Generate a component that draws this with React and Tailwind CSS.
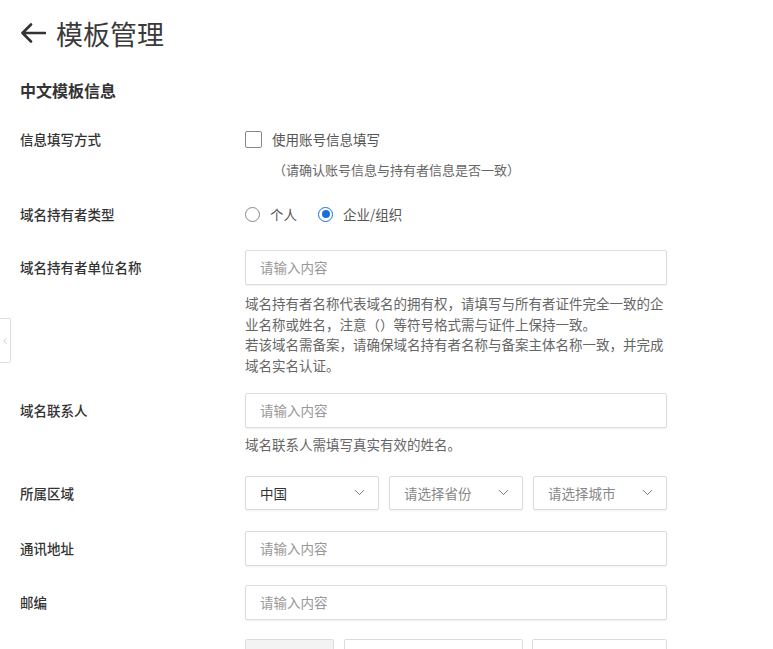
import { ChevronDown, ChevronLeft } from "lucide-react";

const font = { fontFamily: '"Noto Sans CJK SC", "Noto Sans", sans-serif' };

function Label({ children }) {
  return (
    <div className="w-[225px] shrink-0 text-[13.5px] font-medium text-[#333]">
      {children}
    </div>
  );
}

function TextInput() {
  return (
    <div className="flex h-[35px] w-[422px] items-center rounded-[2px] border border-[#dcdcdc] bg-white px-[14px] text-[13.5px] text-[#999] shadow-[0_1px_2px_rgba(0,0,0,0.06)]">
      请输入内容
    </div>
  );
}

function Select({ value, muted }) {
  return (
    <div className="flex h-[34px] w-[134px] items-center justify-between rounded-[2px] border border-[#dcdcdc] bg-white pl-[14px] pr-[10px] shadow-[0_1px_2px_rgba(0,0,0,0.06)]">
      <span className={`text-[13.5px] ${muted ? "text-[#888]" : "text-[#333]"}`}>
        {value}
      </span>
      <ChevronDown size={17} strokeWidth={1.4} className="text-[#777]" />
    </div>
  );
}

function App() {
  return (
    <div className="relative min-h-screen bg-white pl-5 pt-4" style={font}>
      {/* collapsed side tab */}
      <div className="absolute left-0 top-[318px] flex h-[45px] w-[11px] items-center justify-center rounded-r-[2px] border border-l-0 border-[#ddd] bg-white">
        <ChevronLeft size={14} strokeWidth={1.5} className="text-[#aaa]" />
      </div>

      <header className="flex h-[34px] items-center gap-[10px]">
        <svg width="26" height="22" viewBox="0 0 26 22" fill="none">
          <path
            d="M25 11H2.5M11 2.5L2.5 11L11 19.5"
            stroke="#333"
            strokeWidth="2.6"
            strokeLinecap="round"
            strokeLinejoin="round"
          />
        </svg>
        <h1 className="text-[27px] leading-none text-[#3a3a3a]">模板管理</h1>
      </header>

      <h2 className="mt-[30px] text-[16px] font-bold leading-5 text-[#333]">
        中文模板信息
      </h2>

      {/* 信息填写方式 */}
      <div className="mt-[29px] flex h-5 items-center">
        <Label>信息填写方式</Label>
        <div className="flex items-center gap-[10px]">
          <span className="h-[17px] w-[17px] rounded-[2px] border border-[#888] bg-white" />
          <span className="text-[13.5px] text-[#555]">使用账号信息填写</span>
        </div>
      </div>
      <div className="mt-[11px] pl-[225px] text-[13px] leading-5 text-[#666]">
        <span className="pl-[28px]">（请确认账号信息与持有者信息是否一致）</span>
      </div>

      {/* 域名持有者类型 */}
      <div className="mt-6 flex h-5 items-center">
        <Label>域名持有者类型</Label>
        <div className="flex items-center">
          <span className="h-[15px] w-[15px] rounded-full border border-[#888] bg-white" />
          <span className="ml-[10px] text-[13.5px] text-[#555]">个人</span>
          <span className="ml-[21px] flex h-[15px] w-[15px] items-center justify-center rounded-full border border-[#1a6fd6] bg-white">
            <span className="h-[8px] w-[8px] rounded-full bg-[#1a6fd6]" />
          </span>
          <span className="ml-[10px] text-[13.5px] text-[#555]">企业/组织</span>
        </div>
      </div>

      {/* 域名持有者单位名称 */}
      <div className="mt-[26px] flex items-center">
        <Label>域名持有者单位名称</Label>
        <TextInput />
      </div>
      <div className="mt-2 pl-[225px] text-[13.5px] leading-[20.7px] text-[#666]">
        <div>域名持有者名称代表域名的拥有权，请填写与所有者证件完全一致的企</div>
        <div>业名称或姓名，注意（）等符号格式需与证件上保持一致。</div>
        <div>若该域名需备案，请确保域名持有者名称与备案主体名称一致，并完成</div>
        <div>域名实名认证。</div>
      </div>

      {/* 域名联系人 */}
      <div className="mt-[17px] flex items-center">
        <Label>域名联系人</Label>
        <TextInput />
      </div>
      <div className="mt-[6px] pl-[225px] text-[13.5px] leading-5 text-[#666]">
        域名联系人需填写真实有效的姓名。
      </div>

      {/* 所属区域 */}
      <div className="mt-[22px] flex items-center">
        <Label>所属区域</Label>
        <div className="flex gap-[10px]">
          <Select value="中国" />
          <Select value="请选择省份" muted />
          <Select value="请选择城市" muted />
        </div>
      </div>

      {/* 通讯地址 */}
      <div className="mt-[21px] flex items-center">
        <Label>通讯地址</Label>
        <TextInput />
      </div>

      {/* 邮编 */}
      <div className="mt-[19px] flex items-center">
        <Label>邮编</Label>
        <TextInput />
      </div>

      {/* next row, cut off by the viewport */}
      <div className="mt-[19px] flex items-start">
        <div className="w-[225px] shrink-0" />
        <div className="flex">
          <div className="h-[35px] w-[89px] rounded-[2px] border border-[#dcdcdc] bg-[#f3f3f3]" />
          <div className="ml-[10px] h-[35px] w-[179px] rounded-[2px] border border-[#dcdcdc] bg-white" />
          <div className="ml-[9px] h-[35px] w-[135px] rounded-[2px] border border-[#dcdcdc] bg-white" />
        </div>
      </div>
    </div>
  );
}

export default App;
